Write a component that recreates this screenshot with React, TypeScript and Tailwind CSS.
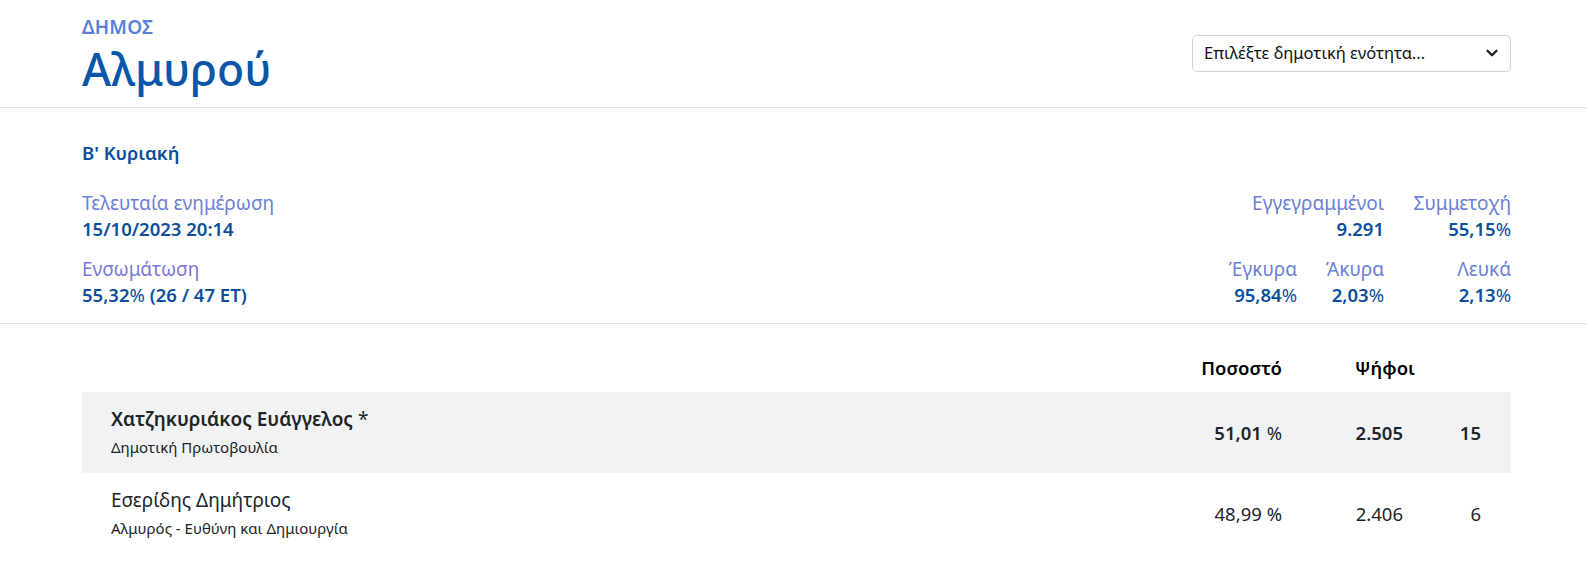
import { ChevronDown } from 'lucide-react';

const font = { fontFamily: '"Noto Sans", "Open Sans", sans-serif' };

type Candidate = {
  name: string;
  party: string;
  pct: string;
  votes: string;
  seats: string;
  winner?: boolean;
};

const candidates: Candidate[] = [
  { name: 'Χατζηκυριάκος Ευάγγελος', party: 'Δημοτική Πρωτοβουλία', pct: '51,01', votes: '2.505', seats: '15', winner: true },
  { name: 'Εσερίδης Δημήτριος', party: 'Αλμυρός - Ευθύνη και Δημιουργία', pct: '48,99', votes: '2.406', seats: '6' },
];

function Stat({ label, value, pct }: { label: string; value: string; pct?: boolean }) {
  return (
    <div className="flex flex-col items-end">
      <span className="text-[19px] leading-[26px] text-[#6b7fd8]">{label}</span>
      <span className="text-[18.5px] leading-[26px] font-semibold text-[#0b4f9c]">
        {value}
        {pct && <span className="font-normal">%</span>}
      </span>
    </div>
  );
}

export default function App() {
  return (
    <div className="min-h-screen bg-white text-[#212529]" style={font}>
      {/* Header */}
      <header className="border-b border-[#dee2e6]">
        <div className="ml-[82px] mr-[76px] h-[107px] flex items-center justify-between">
          <div className="self-start pt-[15px] flex flex-col">
            <span className="text-[19px] leading-[24px] font-semibold text-[#5b7fd8] tracking-[0.2px]">ΔΗΜΟΣ</span>
            <h1 className="mt-[1px] text-[44.5px] leading-[58px] font-medium text-[#0a56a8]">Αλμυρού</h1>
          </div>
          <div className="w-[319px] h-[37px] -mt-[1px] border border-[#ced4da] rounded-[5px] flex items-center justify-between pl-[11px] pr-[9px]">
            <span className="text-[16.5px] text-[#111]">Επιλέξτε δημοτική ενότητα...</span>
            <ChevronDown size={18} strokeWidth={3.2} className="text-[#222]" />
          </div>
        </div>
      </header>

      {/* Summary */}
      <section className="border-b border-[#dee2e6]">
        <div className="ml-[82px] mr-[76px] pt-[31px] pb-[15px]">
          <div className="text-[18.5px] leading-[28px] font-semibold text-[#0b4f9c]">Β' Κυριακή</div>
          <div className="flex justify-between mt-[23px]">
            <div className="flex flex-col">
              <span className="text-[19px] leading-[26px] text-[#6b7fd8]">Τελευταία ενημέρωση</span>
              <span className="text-[18.5px] leading-[26px] font-semibold text-[#0b4f9c]">15/10/2023 20:14</span>
              <span className="mt-[14px] text-[19px] leading-[26px] text-[#7a78d6]">Ενσωμάτωση</span>
              <span className="text-[18.5px] leading-[26px] font-semibold text-[#0b4f9c]">
                55,32<span className="font-normal">%</span> (26 / 47 ΕΤ)
              </span>
            </div>
            <div className="grid grid-cols-[90px_87px_127px] gap-y-[14px]">
              <div />
              <Stat label="Εγγεγραμμένοι" value="9.291" />
              <Stat label="Συμμετοχή" value="55,15" pct />
              <Stat label="Έγκυρα" value="95,84" pct />
              <Stat label="Άκυρα" value="2,03" pct />
              <Stat label="Λευκά" value="2,13" pct />
            </div>
          </div>
        </div>
      </section>

      {/* Results */}
      <section className="ml-[82px] mr-[76px] pt-[24px]">
        <div className="flex items-center h-[44px] pb-[4px] text-[18.5px] font-semibold text-black">
          <div className="flex-1" />
          <div className="w-[140px] text-right">Ποσοστό</div>
          <div className="w-[133px] text-right">Ψήφοι</div>
          <div className="w-[96px]" />
        </div>
        {candidates.map((c) => (
          <div
            key={c.name}
            className={`flex items-center h-[81px] pl-[29px] pr-[30px] text-[#212529] ${c.winner ? 'bg-[#f1f2f4]' : ''}`}
          >
            <div className="flex-1 flex flex-col pt-[1px]">
              <span className={`text-[19px] leading-[28px] ${c.winner ? 'font-semibold' : ''}`}>
                {c.name}
                {c.winner && <span className="font-normal"> *</span>}
              </span>
              <span className="text-[15px] leading-[28px]">{c.party}</span>
            </div>
            <div className={`w-[140px] text-right text-[18.5px] ${c.winner ? 'font-semibold' : ''}`}>
              {c.pct} <span className="font-normal">%</span>
            </div>
            <div className={`w-[121px] text-right text-[18.5px] ${c.winner ? 'font-semibold' : ''}`}>{c.votes}</div>
            <div className={`w-[78px] text-right text-[18.5px] ${c.winner ? 'font-semibold' : ''}`}>{c.seats}</div>
          </div>
        ))}
      </section>
    </div>
  );
}
